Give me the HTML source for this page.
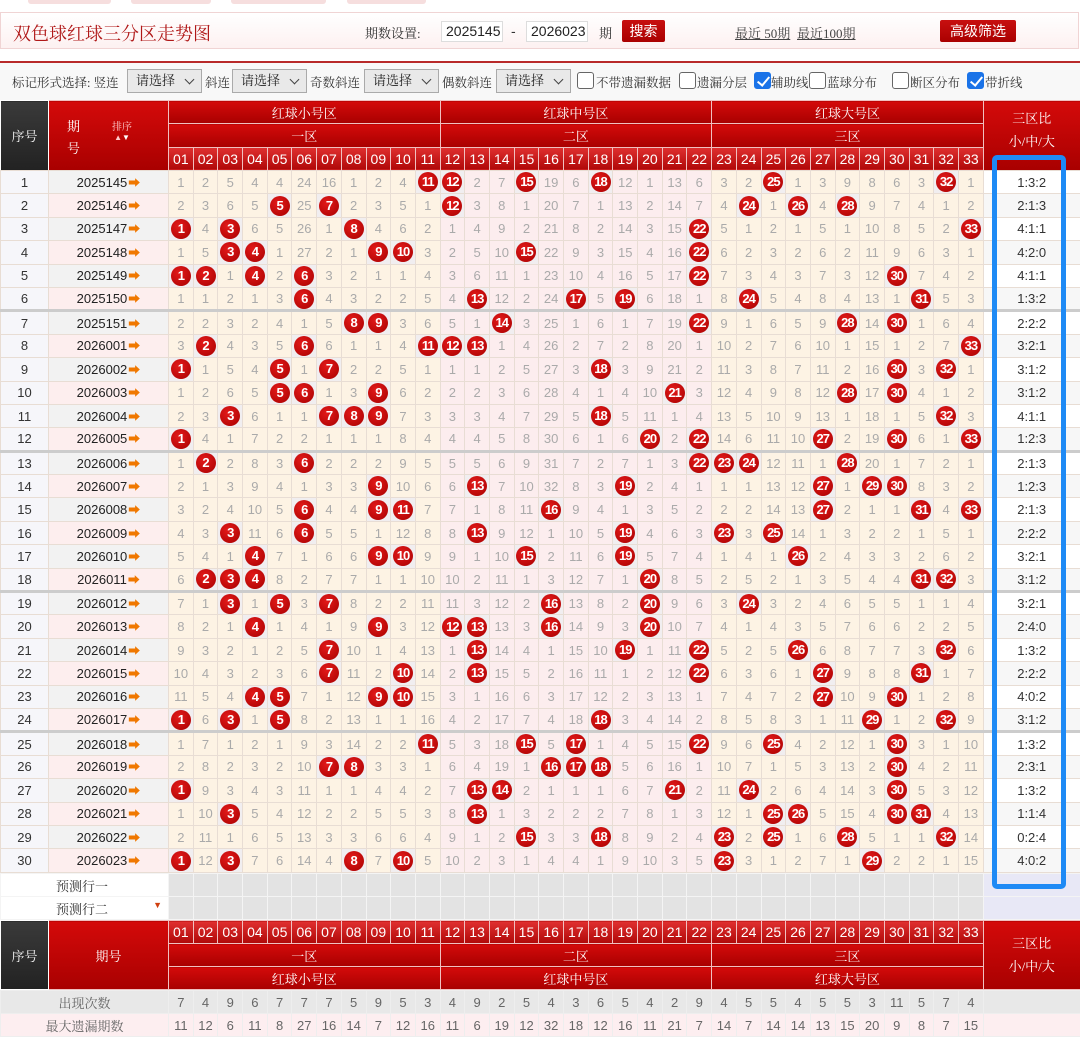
<!DOCTYPE html>
<html><head><meta charset="utf-8">
<style>
*{box-sizing:border-box;margin:0;padding:0}
body{width:1080px;height:1030px;overflow:hidden;background:#fff;font-family:"Liberation Sans","Noto Sans CJK SC",sans-serif;position:relative}
.ab{position:absolute}
.tab{position:absolute;top:0;height:4px;background:#f6dede;border-radius:0 0 3px 3px}
#hd{position:absolute;left:0;top:12px;width:1079px;height:37px;border:1px solid #f0d4d4;background:linear-gradient(#fff,#fdf1f1)}
.sf{font-family:"Liberation Serif","Noto Serif CJK SC",serif}
.inp{position:absolute;top:21px;height:21px;border:1px solid #ddd;background:#fff;font-size:14px;line-height:19px;padding-left:4px;color:#222}
.btn{position:absolute;top:20px;height:22px;background:linear-gradient(#c81010,#a00);color:#fff;font-size:14px;text-align:center;line-height:22px;border-radius:2px}
#rl{position:absolute;left:0;top:61px;width:1080px;height:2px;background:#b82a2a}
#tb{position:absolute;left:0;top:63px;width:1080px;height:37px;background:#f8f8f8;font-size:12.5px;color:#333}
.sel{position:absolute;top:6px;height:24px;border:1px solid #aaa;background:#e9e9e9;font-size:13px;line-height:22px;padding-left:8px;color:#222}
.sel:after{content:"";position:absolute;right:8px;top:6px;width:6px;height:6px;border-right:1px solid #444;border-bottom:1px solid #444;transform:rotate(45deg)}
.cb{position:absolute;top:9px;width:17px;height:17px;border:1px solid #666;border-radius:3px;background:#fff}
.cb.on{background:#1a73e8;border-color:#1a73e8}
.cb.on:after{content:"";position:absolute;left:5px;top:1px;width:5px;height:10px;border-right:2.5px solid #fff;border-bottom:2.5px solid #fff;transform:rotate(40deg)}
.lb{position:absolute;top:10px}
table{position:absolute;left:0;border-collapse:collapse;table-layout:fixed;width:1080px}
td,th{padding:0;text-align:center;overflow:hidden;white-space:nowrap}
.h th{background:linear-gradient(#d40a0a,#a80000);color:#fff;font-weight:normal;font-size:13px;border:1px solid #f0c0c0;height:23px}
.h th.n{background:linear-gradient(#e03030,#b00808);font-size:14px}
.h th.dk{background:linear-gradient(#3a3a3a,#222);border-color:#fff}
#t td{height:23.4px;border:1px solid #e8ddd4;font-size:13px;color:#aaa;font-weight:300}
#t td:nth-child(1){background:#f6f6fa;color:#333;font-size:13px}
#t td:nth-child(2){color:#222;font-size:13px;background:#f2f2f2}
#t tr:nth-child(even) td:nth-child(2){background:#fdeeee}
#t td:nth-child(n+3){background:#fdf3e4}
#t td:nth-child(n+14){background:#fcedee}
#t td:nth-child(n+25){background:#fdf3e4}
#t td:nth-child(36){background:#fff;color:#333}
#t tr:nth-child(even) td:nth-child(36){background:#f7f7f7}
#t td.b{background:#f1eef0!important}
b{display:inline-block;width:20px;height:20px;border-radius:50%;background:radial-gradient(circle at 40% 35%,#e31a1a,#a80000);color:#fff;font-weight:bold;line-height:20px;font-size:13px;letter-spacing:-1px;vertical-align:middle}
i{font-style:normal;color:#f07800;font-size:12px;margin-left:1px}
#t tr.s td{border-top:3px solid #ccc}
.p td{height:23px;background:#e3e3e3;border:1px solid #f4f4f4}
.p td.w{background:#fff;text-align:left;padding-left:55px;font-size:13px;color:#333}
.p td.v{background:#e8e8f6}
.f td{height:23px;font-size:13px;color:#666;border:1px solid #eee}
</style></head><body>
<div class="tab" style="left:28px;width:83px"></div><div class="tab" style="left:131px;width:80px"></div><div class="tab" style="left:231px;width:95px"></div><div class="tab" style="left:347px;width:79px"></div>
<div id="hd"></div>
<div class="ab sf" style="left:13px;top:20px;font-size:18px;color:#b01818">双色球红球三分区走势图</div>
<div class="ab sf" style="left:365px;top:23px;font-size:13px;color:#333">期数设置:</div>
<div class="inp" style="left:441px;width:62px">2025145</div>
<div class="ab" style="left:511px;top:23px;font-size:14px;color:#333">-</div>
<div class="inp" style="left:526px;width:62px">2026023</div>
<div class="ab sf" style="left:599px;top:23px;font-size:13px;color:#333">期</div>
<div class="btn" style="left:622px;width:43px">搜索</div>
<div class="ab sf" style="left:735px;top:23px;font-size:13px;color:#444;text-decoration:underline">最近 50期</div>
<div class="ab sf" style="left:797px;top:23px;font-size:13px;color:#444;text-decoration:underline">最近100期</div>
<div class="btn" style="left:940px;width:76px">高级筛选</div>
<div id="rl"></div>
<div id="tb" class="sf">
<span class="lb" style="left:12px">标记形式选择: 竖连</span>
<div class="sel" style="left:127px;width:75px">请选择</div>
<span class="lb" style="left:205px">斜连</span>
<div class="sel" style="left:232px;width:75px">请选择</div>
<span class="lb" style="left:310px">奇数斜连</span>
<div class="sel" style="left:364px;width:75px">请选择</div>
<span class="lb" style="left:442px">偶数斜连</span>
<div class="sel" style="left:496px;width:75px">请选择</div>
<div class="cb" style="left:577px"></div><span class="lb" style="left:596px">不带遗漏数据</span>
<div class="cb" style="left:679px"></div><span class="lb" style="left:697px">遗漏分层</span>
<div class="cb on" style="left:754px"></div><span class="lb" style="left:771px">辅助线</span>
<div class="cb" style="left:809px"></div><span class="lb" style="left:827px">蓝球分布</span>
<div class="cb" style="left:892px"></div><span class="lb" style="left:910px">断区分布</span>
<div class="cb on" style="left:967px"></div><span class="lb" style="left:985px">带折线</span>
</div>

<table class="h" style="top:100px">
<colgroup><col style="width:48px"><col style="width:120px"><col span="33" style="width:24.697px"><col style="width:97px"></colgroup>
<tr><th rowspan="3" class="dk sf" style="height:70px">序号</th><th rowspan="3" class="sf" style="position:relative"><span style="position:absolute;left:18px;top:15px;line-height:22px">期<br>号</span><span style="position:absolute;left:63px;top:22px;font-size:10px;line-height:10px;color:#fcc">排序<br><span style="font-size:8px">▲</span><span style="color:#fff;font-size:8px">▼</span></span></th><th colspan="11" class="sf">红球小号区</th><th colspan="11" class="sf">红球中号区</th><th colspan="11" class="sf">红球大号区</th><th rowspan="3" class="sf" style="line-height:23px;padding-bottom:12px">三区比<br>小/中/大</th></tr>
<tr><th colspan="11" class="sf">一区</th><th colspan="11" class="sf">二区</th><th colspan="11" class="sf">三区</th></tr>
<tr><th class="n">01</th><th class="n">02</th><th class="n">03</th><th class="n">04</th><th class="n">05</th><th class="n">06</th><th class="n">07</th><th class="n">08</th><th class="n">09</th><th class="n">10</th><th class="n">11</th><th class="n">12</th><th class="n">13</th><th class="n">14</th><th class="n">15</th><th class="n">16</th><th class="n">17</th><th class="n">18</th><th class="n">19</th><th class="n">20</th><th class="n">21</th><th class="n">22</th><th class="n">23</th><th class="n">24</th><th class="n">25</th><th class="n">26</th><th class="n">27</th><th class="n">28</th><th class="n">29</th><th class="n">30</th><th class="n">31</th><th class="n">32</th><th class="n">33</th></tr>
</table>

<table id="t" style="top:170px">
<colgroup><col style="width:48px"><col style="width:120px"><col span="33" style="width:24.697px"><col style="width:97px"></colgroup>
<tr><td>1</td><td>2025145<i>➡</i></td><td>1</td><td>2</td><td>5</td><td>4</td><td>4</td><td>24</td><td>16</td><td>1</td><td>2</td><td>4</td><td class="b"><b>11</b></td><td class="b"><b>12</b></td><td>2</td><td>7</td><td class="b"><b>15</b></td><td>19</td><td>6</td><td class="b"><b>18</b></td><td>12</td><td>1</td><td>13</td><td>6</td><td>3</td><td>2</td><td class="b"><b>25</b></td><td>1</td><td>3</td><td>9</td><td>8</td><td>6</td><td>3</td><td class="b"><b>32</b></td><td>1</td><td>1:3:2</td></tr>
<tr><td>2</td><td>2025146<i>➡</i></td><td>2</td><td>3</td><td>6</td><td>5</td><td class="b"><b>5</b></td><td>25</td><td class="b"><b>7</b></td><td>2</td><td>3</td><td>5</td><td>1</td><td class="b"><b>12</b></td><td>3</td><td>8</td><td>1</td><td>20</td><td>7</td><td>1</td><td>13</td><td>2</td><td>14</td><td>7</td><td>4</td><td class="b"><b>24</b></td><td>1</td><td class="b"><b>26</b></td><td>4</td><td class="b"><b>28</b></td><td>9</td><td>7</td><td>4</td><td>1</td><td>2</td><td>2:1:3</td></tr>
<tr><td>3</td><td>2025147<i>➡</i></td><td class="b"><b>1</b></td><td>4</td><td class="b"><b>3</b></td><td>6</td><td>5</td><td>26</td><td>1</td><td class="b"><b>8</b></td><td>4</td><td>6</td><td>2</td><td>1</td><td>4</td><td>9</td><td>2</td><td>21</td><td>8</td><td>2</td><td>14</td><td>3</td><td>15</td><td class="b"><b>22</b></td><td>5</td><td>1</td><td>2</td><td>1</td><td>5</td><td>1</td><td>10</td><td>8</td><td>5</td><td>2</td><td class="b"><b>33</b></td><td>4:1:1</td></tr>
<tr><td>4</td><td>2025148<i>➡</i></td><td>1</td><td>5</td><td class="b"><b>3</b></td><td class="b"><b>4</b></td><td>1</td><td>27</td><td>2</td><td>1</td><td class="b"><b>9</b></td><td class="b"><b>10</b></td><td>3</td><td>2</td><td>5</td><td>10</td><td class="b"><b>15</b></td><td>22</td><td>9</td><td>3</td><td>15</td><td>4</td><td>16</td><td class="b"><b>22</b></td><td>6</td><td>2</td><td>3</td><td>2</td><td>6</td><td>2</td><td>11</td><td>9</td><td>6</td><td>3</td><td>1</td><td>4:2:0</td></tr>
<tr><td>5</td><td>2025149<i>➡</i></td><td class="b"><b>1</b></td><td class="b"><b>2</b></td><td>1</td><td class="b"><b>4</b></td><td>2</td><td class="b"><b>6</b></td><td>3</td><td>2</td><td>1</td><td>1</td><td>4</td><td>3</td><td>6</td><td>11</td><td>1</td><td>23</td><td>10</td><td>4</td><td>16</td><td>5</td><td>17</td><td class="b"><b>22</b></td><td>7</td><td>3</td><td>4</td><td>3</td><td>7</td><td>3</td><td>12</td><td class="b"><b>30</b></td><td>7</td><td>4</td><td>2</td><td>4:1:1</td></tr>
<tr><td>6</td><td>2025150<i>➡</i></td><td>1</td><td>1</td><td>2</td><td>1</td><td>3</td><td class="b"><b>6</b></td><td>4</td><td>3</td><td>2</td><td>2</td><td>5</td><td>4</td><td class="b"><b>13</b></td><td>12</td><td>2</td><td>24</td><td class="b"><b>17</b></td><td>5</td><td class="b"><b>19</b></td><td>6</td><td>18</td><td>1</td><td>8</td><td class="b"><b>24</b></td><td>5</td><td>4</td><td>8</td><td>4</td><td>13</td><td>1</td><td class="b"><b>31</b></td><td>5</td><td>3</td><td>1:3:2</td></tr>
<tr class="s"><td>7</td><td>2025151<i>➡</i></td><td>2</td><td>2</td><td>3</td><td>2</td><td>4</td><td>1</td><td>5</td><td class="b"><b>8</b></td><td class="b"><b>9</b></td><td>3</td><td>6</td><td>5</td><td>1</td><td class="b"><b>14</b></td><td>3</td><td>25</td><td>1</td><td>6</td><td>1</td><td>7</td><td>19</td><td class="b"><b>22</b></td><td>9</td><td>1</td><td>6</td><td>5</td><td>9</td><td class="b"><b>28</b></td><td>14</td><td class="b"><b>30</b></td><td>1</td><td>6</td><td>4</td><td>2:2:2</td></tr>
<tr><td>8</td><td>2026001<i>➡</i></td><td>3</td><td class="b"><b>2</b></td><td>4</td><td>3</td><td>5</td><td class="b"><b>6</b></td><td>6</td><td>1</td><td>1</td><td>4</td><td class="b"><b>11</b></td><td class="b"><b>12</b></td><td class="b"><b>13</b></td><td>1</td><td>4</td><td>26</td><td>2</td><td>7</td><td>2</td><td>8</td><td>20</td><td>1</td><td>10</td><td>2</td><td>7</td><td>6</td><td>10</td><td>1</td><td>15</td><td>1</td><td>2</td><td>7</td><td class="b"><b>33</b></td><td>3:2:1</td></tr>
<tr><td>9</td><td>2026002<i>➡</i></td><td class="b"><b>1</b></td><td>1</td><td>5</td><td>4</td><td class="b"><b>5</b></td><td>1</td><td class="b"><b>7</b></td><td>2</td><td>2</td><td>5</td><td>1</td><td>1</td><td>1</td><td>2</td><td>5</td><td>27</td><td>3</td><td class="b"><b>18</b></td><td>3</td><td>9</td><td>21</td><td>2</td><td>11</td><td>3</td><td>8</td><td>7</td><td>11</td><td>2</td><td>16</td><td class="b"><b>30</b></td><td>3</td><td class="b"><b>32</b></td><td>1</td><td>3:1:2</td></tr>
<tr><td>10</td><td>2026003<i>➡</i></td><td>1</td><td>2</td><td>6</td><td>5</td><td class="b"><b>5</b></td><td class="b"><b>6</b></td><td>1</td><td>3</td><td class="b"><b>9</b></td><td>6</td><td>2</td><td>2</td><td>2</td><td>3</td><td>6</td><td>28</td><td>4</td><td>1</td><td>4</td><td>10</td><td class="b"><b>21</b></td><td>3</td><td>12</td><td>4</td><td>9</td><td>8</td><td>12</td><td class="b"><b>28</b></td><td>17</td><td class="b"><b>30</b></td><td>4</td><td>1</td><td>2</td><td>3:1:2</td></tr>
<tr><td>11</td><td>2026004<i>➡</i></td><td>2</td><td>3</td><td class="b"><b>3</b></td><td>6</td><td>1</td><td>1</td><td class="b"><b>7</b></td><td class="b"><b>8</b></td><td class="b"><b>9</b></td><td>7</td><td>3</td><td>3</td><td>3</td><td>4</td><td>7</td><td>29</td><td>5</td><td class="b"><b>18</b></td><td>5</td><td>11</td><td>1</td><td>4</td><td>13</td><td>5</td><td>10</td><td>9</td><td>13</td><td>1</td><td>18</td><td>1</td><td>5</td><td class="b"><b>32</b></td><td>3</td><td>4:1:1</td></tr>
<tr><td>12</td><td>2026005<i>➡</i></td><td class="b"><b>1</b></td><td>4</td><td>1</td><td>7</td><td>2</td><td>2</td><td>1</td><td>1</td><td>1</td><td>8</td><td>4</td><td>4</td><td>4</td><td>5</td><td>8</td><td>30</td><td>6</td><td>1</td><td>6</td><td class="b"><b>20</b></td><td>2</td><td class="b"><b>22</b></td><td>14</td><td>6</td><td>11</td><td>10</td><td class="b"><b>27</b></td><td>2</td><td>19</td><td class="b"><b>30</b></td><td>6</td><td>1</td><td class="b"><b>33</b></td><td>1:2:3</td></tr>
<tr class="s"><td>13</td><td>2026006<i>➡</i></td><td>1</td><td class="b"><b>2</b></td><td>2</td><td>8</td><td>3</td><td class="b"><b>6</b></td><td>2</td><td>2</td><td>2</td><td>9</td><td>5</td><td>5</td><td>5</td><td>6</td><td>9</td><td>31</td><td>7</td><td>2</td><td>7</td><td>1</td><td>3</td><td class="b"><b>22</b></td><td class="b"><b>23</b></td><td class="b"><b>24</b></td><td>12</td><td>11</td><td>1</td><td class="b"><b>28</b></td><td>20</td><td>1</td><td>7</td><td>2</td><td>1</td><td>2:1:3</td></tr>
<tr><td>14</td><td>2026007<i>➡</i></td><td>2</td><td>1</td><td>3</td><td>9</td><td>4</td><td>1</td><td>3</td><td>3</td><td class="b"><b>9</b></td><td>10</td><td>6</td><td>6</td><td class="b"><b>13</b></td><td>7</td><td>10</td><td>32</td><td>8</td><td>3</td><td class="b"><b>19</b></td><td>2</td><td>4</td><td>1</td><td>1</td><td>1</td><td>13</td><td>12</td><td class="b"><b>27</b></td><td>1</td><td class="b"><b>29</b></td><td class="b"><b>30</b></td><td>8</td><td>3</td><td>2</td><td>1:2:3</td></tr>
<tr><td>15</td><td>2026008<i>➡</i></td><td>3</td><td>2</td><td>4</td><td>10</td><td>5</td><td class="b"><b>6</b></td><td>4</td><td>4</td><td class="b"><b>9</b></td><td class="b"><b>11</b></td><td>7</td><td>7</td><td>1</td><td>8</td><td>11</td><td class="b"><b>16</b></td><td>9</td><td>4</td><td>1</td><td>3</td><td>5</td><td>2</td><td>2</td><td>2</td><td>14</td><td>13</td><td class="b"><b>27</b></td><td>2</td><td>1</td><td>1</td><td class="b"><b>31</b></td><td>4</td><td class="b"><b>33</b></td><td>2:1:3</td></tr>
<tr><td>16</td><td>2026009<i>➡</i></td><td>4</td><td>3</td><td class="b"><b>3</b></td><td>11</td><td>6</td><td class="b"><b>6</b></td><td>5</td><td>5</td><td>1</td><td>12</td><td>8</td><td>8</td><td class="b"><b>13</b></td><td>9</td><td>12</td><td>1</td><td>10</td><td>5</td><td class="b"><b>19</b></td><td>4</td><td>6</td><td>3</td><td class="b"><b>23</b></td><td>3</td><td class="b"><b>25</b></td><td>14</td><td>1</td><td>3</td><td>2</td><td>2</td><td>1</td><td>5</td><td>1</td><td>2:2:2</td></tr>
<tr><td>17</td><td>2026010<i>➡</i></td><td>5</td><td>4</td><td>1</td><td class="b"><b>4</b></td><td>7</td><td>1</td><td>6</td><td>6</td><td class="b"><b>9</b></td><td class="b"><b>10</b></td><td>9</td><td>9</td><td>1</td><td>10</td><td class="b"><b>15</b></td><td>2</td><td>11</td><td>6</td><td class="b"><b>19</b></td><td>5</td><td>7</td><td>4</td><td>1</td><td>4</td><td>1</td><td class="b"><b>26</b></td><td>2</td><td>4</td><td>3</td><td>3</td><td>2</td><td>6</td><td>2</td><td>3:2:1</td></tr>
<tr><td>18</td><td>2026011<i>➡</i></td><td>6</td><td class="b"><b>2</b></td><td class="b"><b>3</b></td><td class="b"><b>4</b></td><td>8</td><td>2</td><td>7</td><td>7</td><td>1</td><td>1</td><td>10</td><td>10</td><td>2</td><td>11</td><td>1</td><td>3</td><td>12</td><td>7</td><td>1</td><td class="b"><b>20</b></td><td>8</td><td>5</td><td>2</td><td>5</td><td>2</td><td>1</td><td>3</td><td>5</td><td>4</td><td>4</td><td class="b"><b>31</b></td><td class="b"><b>32</b></td><td>3</td><td>3:1:2</td></tr>
<tr class="s"><td>19</td><td>2026012<i>➡</i></td><td>7</td><td>1</td><td class="b"><b>3</b></td><td>1</td><td class="b"><b>5</b></td><td>3</td><td class="b"><b>7</b></td><td>8</td><td>2</td><td>2</td><td>11</td><td>11</td><td>3</td><td>12</td><td>2</td><td class="b"><b>16</b></td><td>13</td><td>8</td><td>2</td><td class="b"><b>20</b></td><td>9</td><td>6</td><td>3</td><td class="b"><b>24</b></td><td>3</td><td>2</td><td>4</td><td>6</td><td>5</td><td>5</td><td>1</td><td>1</td><td>4</td><td>3:2:1</td></tr>
<tr><td>20</td><td>2026013<i>➡</i></td><td>8</td><td>2</td><td>1</td><td class="b"><b>4</b></td><td>1</td><td>4</td><td>1</td><td>9</td><td class="b"><b>9</b></td><td>3</td><td>12</td><td class="b"><b>12</b></td><td class="b"><b>13</b></td><td>13</td><td>3</td><td class="b"><b>16</b></td><td>14</td><td>9</td><td>3</td><td class="b"><b>20</b></td><td>10</td><td>7</td><td>4</td><td>1</td><td>4</td><td>3</td><td>5</td><td>7</td><td>6</td><td>6</td><td>2</td><td>2</td><td>5</td><td>2:4:0</td></tr>
<tr><td>21</td><td>2026014<i>➡</i></td><td>9</td><td>3</td><td>2</td><td>1</td><td>2</td><td>5</td><td class="b"><b>7</b></td><td>10</td><td>1</td><td>4</td><td>13</td><td>1</td><td class="b"><b>13</b></td><td>14</td><td>4</td><td>1</td><td>15</td><td>10</td><td class="b"><b>19</b></td><td>1</td><td>11</td><td class="b"><b>22</b></td><td>5</td><td>2</td><td>5</td><td class="b"><b>26</b></td><td>6</td><td>8</td><td>7</td><td>7</td><td>3</td><td class="b"><b>32</b></td><td>6</td><td>1:3:2</td></tr>
<tr><td>22</td><td>2026015<i>➡</i></td><td>10</td><td>4</td><td>3</td><td>2</td><td>3</td><td>6</td><td class="b"><b>7</b></td><td>11</td><td>2</td><td class="b"><b>10</b></td><td>14</td><td>2</td><td class="b"><b>13</b></td><td>15</td><td>5</td><td>2</td><td>16</td><td>11</td><td>1</td><td>2</td><td>12</td><td class="b"><b>22</b></td><td>6</td><td>3</td><td>6</td><td>1</td><td class="b"><b>27</b></td><td>9</td><td>8</td><td>8</td><td class="b"><b>31</b></td><td>1</td><td>7</td><td>2:2:2</td></tr>
<tr><td>23</td><td>2026016<i>➡</i></td><td>11</td><td>5</td><td>4</td><td class="b"><b>4</b></td><td class="b"><b>5</b></td><td>7</td><td>1</td><td>12</td><td class="b"><b>9</b></td><td class="b"><b>10</b></td><td>15</td><td>3</td><td>1</td><td>16</td><td>6</td><td>3</td><td>17</td><td>12</td><td>2</td><td>3</td><td>13</td><td>1</td><td>7</td><td>4</td><td>7</td><td>2</td><td class="b"><b>27</b></td><td>10</td><td>9</td><td class="b"><b>30</b></td><td>1</td><td>2</td><td>8</td><td>4:0:2</td></tr>
<tr><td>24</td><td>2026017<i>➡</i></td><td class="b"><b>1</b></td><td>6</td><td class="b"><b>3</b></td><td>1</td><td class="b"><b>5</b></td><td>8</td><td>2</td><td>13</td><td>1</td><td>1</td><td>16</td><td>4</td><td>2</td><td>17</td><td>7</td><td>4</td><td>18</td><td class="b"><b>18</b></td><td>3</td><td>4</td><td>14</td><td>2</td><td>8</td><td>5</td><td>8</td><td>3</td><td>1</td><td>11</td><td class="b"><b>29</b></td><td>1</td><td>2</td><td class="b"><b>32</b></td><td>9</td><td>3:1:2</td></tr>
<tr class="s"><td>25</td><td>2026018<i>➡</i></td><td>1</td><td>7</td><td>1</td><td>2</td><td>1</td><td>9</td><td>3</td><td>14</td><td>2</td><td>2</td><td class="b"><b>11</b></td><td>5</td><td>3</td><td>18</td><td class="b"><b>15</b></td><td>5</td><td class="b"><b>17</b></td><td>1</td><td>4</td><td>5</td><td>15</td><td class="b"><b>22</b></td><td>9</td><td>6</td><td class="b"><b>25</b></td><td>4</td><td>2</td><td>12</td><td>1</td><td class="b"><b>30</b></td><td>3</td><td>1</td><td>10</td><td>1:3:2</td></tr>
<tr><td>26</td><td>2026019<i>➡</i></td><td>2</td><td>8</td><td>2</td><td>3</td><td>2</td><td>10</td><td class="b"><b>7</b></td><td class="b"><b>8</b></td><td>3</td><td>3</td><td>1</td><td>6</td><td>4</td><td>19</td><td>1</td><td class="b"><b>16</b></td><td class="b"><b>17</b></td><td class="b"><b>18</b></td><td>5</td><td>6</td><td>16</td><td>1</td><td>10</td><td>7</td><td>1</td><td>5</td><td>3</td><td>13</td><td>2</td><td class="b"><b>30</b></td><td>4</td><td>2</td><td>11</td><td>2:3:1</td></tr>
<tr><td>27</td><td>2026020<i>➡</i></td><td class="b"><b>1</b></td><td>9</td><td>3</td><td>4</td><td>3</td><td>11</td><td>1</td><td>1</td><td>4</td><td>4</td><td>2</td><td>7</td><td class="b"><b>13</b></td><td class="b"><b>14</b></td><td>2</td><td>1</td><td>1</td><td>1</td><td>6</td><td>7</td><td class="b"><b>21</b></td><td>2</td><td>11</td><td class="b"><b>24</b></td><td>2</td><td>6</td><td>4</td><td>14</td><td>3</td><td class="b"><b>30</b></td><td>5</td><td>3</td><td>12</td><td>1:3:2</td></tr>
<tr><td>28</td><td>2026021<i>➡</i></td><td>1</td><td>10</td><td class="b"><b>3</b></td><td>5</td><td>4</td><td>12</td><td>2</td><td>2</td><td>5</td><td>5</td><td>3</td><td>8</td><td class="b"><b>13</b></td><td>1</td><td>3</td><td>2</td><td>2</td><td>2</td><td>7</td><td>8</td><td>1</td><td>3</td><td>12</td><td>1</td><td class="b"><b>25</b></td><td class="b"><b>26</b></td><td>5</td><td>15</td><td>4</td><td class="b"><b>30</b></td><td class="b"><b>31</b></td><td>4</td><td>13</td><td>1:1:4</td></tr>
<tr><td>29</td><td>2026022<i>➡</i></td><td>2</td><td>11</td><td>1</td><td>6</td><td>5</td><td>13</td><td>3</td><td>3</td><td>6</td><td>6</td><td>4</td><td>9</td><td>1</td><td>2</td><td class="b"><b>15</b></td><td>3</td><td>3</td><td class="b"><b>18</b></td><td>8</td><td>9</td><td>2</td><td>4</td><td class="b"><b>23</b></td><td>2</td><td class="b"><b>25</b></td><td>1</td><td>6</td><td class="b"><b>28</b></td><td>5</td><td>1</td><td>1</td><td class="b"><b>32</b></td><td>14</td><td>0:2:4</td></tr>
<tr><td>30</td><td>2026023<i>➡</i></td><td class="b"><b>1</b></td><td>12</td><td class="b"><b>3</b></td><td>7</td><td>6</td><td>14</td><td>4</td><td class="b"><b>8</b></td><td>7</td><td class="b"><b>10</b></td><td>5</td><td>10</td><td>2</td><td>3</td><td>1</td><td>4</td><td>4</td><td>1</td><td>9</td><td>10</td><td>3</td><td>5</td><td class="b"><b>23</b></td><td>3</td><td>1</td><td>2</td><td>7</td><td>1</td><td class="b"><b>29</b></td><td>2</td><td>2</td><td>1</td><td>15</td><td>4:0:2</td></tr>
</table>

<table class="p" style="top:873px">
<colgroup><col style="width:168px"><col span="33" style="width:24.697px"><col style="width:97px"></colgroup>
<tr><td class="w sf">预测行一</td><td></td><td></td><td></td><td></td><td></td><td></td><td></td><td></td><td></td><td></td><td></td><td></td><td></td><td></td><td></td><td></td><td></td><td></td><td></td><td></td><td></td><td></td><td></td><td></td><td></td><td></td><td></td><td></td><td></td><td></td><td></td><td></td><td></td><td class="v"></td></tr>
<tr><td class="w sf" style="position:relative">预测行二<span style="position:absolute;right:6px;top:3px;color:#d04010;font-size:9px">▼</span></td><td></td><td></td><td></td><td></td><td></td><td></td><td></td><td></td><td></td><td></td><td></td><td></td><td></td><td></td><td></td><td></td><td></td><td></td><td></td><td></td><td></td><td></td><td></td><td></td><td></td><td></td><td></td><td></td><td></td><td></td><td></td><td></td><td></td><td class="v"></td></tr>
</table>

<table class="h" style="top:920px">
<colgroup><col style="width:48px"><col style="width:120px"><col span="33" style="width:24.697px"><col style="width:97px"></colgroup>
<tr><th rowspan="3" class="dk sf">序号</th><th rowspan="3" class="sf">期号</th><th class="n">01</th><th class="n">02</th><th class="n">03</th><th class="n">04</th><th class="n">05</th><th class="n">06</th><th class="n">07</th><th class="n">08</th><th class="n">09</th><th class="n">10</th><th class="n">11</th><th class="n">12</th><th class="n">13</th><th class="n">14</th><th class="n">15</th><th class="n">16</th><th class="n">17</th><th class="n">18</th><th class="n">19</th><th class="n">20</th><th class="n">21</th><th class="n">22</th><th class="n">23</th><th class="n">24</th><th class="n">25</th><th class="n">26</th><th class="n">27</th><th class="n">28</th><th class="n">29</th><th class="n">30</th><th class="n">31</th><th class="n">32</th><th class="n">33</th><th rowspan="3" class="sf" style="line-height:23px">三区比<br>小/中/大</th></tr>
<tr><th colspan="11" class="sf">一区</th><th colspan="11" class="sf">二区</th><th colspan="11" class="sf">三区</th></tr>
<tr><th colspan="11" class="sf">红球小号区</th><th colspan="11" class="sf">红球中号区</th><th colspan="11" class="sf">红球大号区</th></tr>
</table>

<table class="f" style="top:990px">
<colgroup><col style="width:168px"><col span="33" style="width:24.697px"><col style="width:97px"></colgroup>
<tr style="background:#e8e8e8"><td class="sf">出现次数</td><td>7</td><td>4</td><td>9</td><td>6</td><td>7</td><td>7</td><td>7</td><td>5</td><td>9</td><td>5</td><td>3</td><td>4</td><td>9</td><td>2</td><td>5</td><td>4</td><td>3</td><td>6</td><td>5</td><td>4</td><td>2</td><td>9</td><td>4</td><td>5</td><td>5</td><td>4</td><td>5</td><td>5</td><td>3</td><td>11</td><td>5</td><td>7</td><td>4</td><td></td></tr>
<tr style="background:#fdeef0"><td class="sf">最大遗漏期数</td><td>11</td><td>12</td><td>6</td><td>11</td><td>8</td><td>27</td><td>16</td><td>14</td><td>7</td><td>12</td><td>16</td><td>11</td><td>6</td><td>19</td><td>12</td><td>32</td><td>18</td><td>12</td><td>16</td><td>11</td><td>21</td><td>7</td><td>14</td><td>7</td><td>14</td><td>14</td><td>13</td><td>15</td><td>20</td><td>9</td><td>8</td><td>7</td><td>15</td><td></td></tr>
</table>

<div class="ab" style="left:992px;top:155px;width:74px;height:734px;border:5px solid #1e8af5;border-radius:5px"></div>
</body></html>
